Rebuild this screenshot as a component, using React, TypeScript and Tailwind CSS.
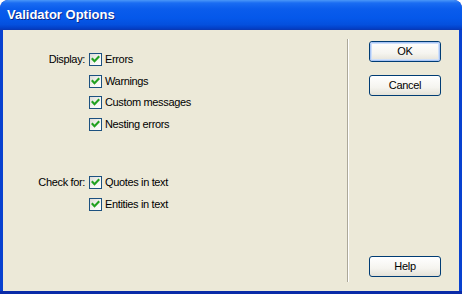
import React from "react";

const font = "font-['Liberation_Sans',Arial,sans-serif]";

function Check({ label }: { label: string }) {
  return (
    <div className="flex h-[21.5px] items-center">
      <div className="flex h-[13px] w-[13px] items-center justify-center border border-[#1C5180] bg-[linear-gradient(135deg,#DCDCD7_0%,#F3F3EF_50%,#FFFFFF_100%)]">
        <svg width="11" height="11" viewBox="0 0 11 11">
          <polyline points="2.5,5 4.5,7.2 8.5,3" fill="none" stroke="#21A121" strokeWidth="2.1" strokeLinecap="square" />
        </svg>
      </div>
      <span className="ml-[3px] text-[11px] tracking-[-0.35px] text-black leading-none">{label}</span>
    </div>
  );
}

function Group({ title, items, className }: { title: string; items: string[]; className?: string }) {
  return (
    <div className={"flex " + (className ?? "")}>
      <div className="w-[86px] pr-[4px] text-right">
        <div className="flex h-[21.5px] items-center justify-end text-[11px] tracking-[-0.35px] leading-none text-black">{title}</div>
      </div>
      <div className="flex flex-col">
        {items.map((i) => (
          <Check key={i} label={i} />
        ))}
      </div>
    </div>
  );
}

function Btn({ label, def }: { label: string; def?: boolean }) {
  return (
    <div className="h-[21px] w-[72px] rounded-[3px] border border-[#003C74] bg-[linear-gradient(to_bottom,#FFFFFF_0%,#F5F4EF_60%,#E4E2D8_100%)] p-0">
      <div
        className={
          "flex h-full w-full items-center justify-center rounded-[2px] text-[11px] tracking-[-0.3px] leading-none text-black " +
          (def ? "border border-[#A8C4F5] shadow-[inset_0_0_0_1px_#CFE0FA]" : "")
        }
      >
        {label}
      </div>
    </div>
  );
}

export default function App() {
  return (
    <div className={"h-[294px] w-[462px] overflow-hidden rounded-t-[8px] bg-[#0841D0] " + font}>
      <div className="flex h-[30px] items-center rounded-t-[8px] bg-[linear-gradient(to_bottom,#4A97F8_0%,#1A6CF2_10%,#0A5CEC_30%,#0558EA_60%,#0450DE_82%,#0340C8_94%,#0A36B0_100%)] pl-[7px]">
        <span className="text-[13px] font-bold text-white [text-shadow:1px_1px_0_#0B2A8C] tracking-[0px]">Validator Options</span>
      </div>
      <div className="mx-[3px] flex h-[261px] bg-[#ECE9D8]">
        <div className="flex w-[344px] flex-col pt-[19px]">
          <Group title="Display:" items={["Errors", "Warnings", "Custom messages", "Nesting errors"]} />
          <Group title="Check for:" items={["Quotes in text", "Entities in text"]} className="mt-[37px]" />
        </div>
        <div className="my-[9px] w-[2px] border-l border-r border-l-[#ACA899] border-r-white" />
        <div className="flex flex-col pl-[20px] pt-[11px] pb-[14px]">
          <Btn label="OK" def />
          <div className="mt-[13px]">
            <Btn label="Cancel" />
          </div>
          <div className="mt-auto">
            <Btn label="Help" />
          </div>
        </div>
      </div>
      <div className="h-[3px] bg-[#0A2BA8]" />
    </div>
  );
}
